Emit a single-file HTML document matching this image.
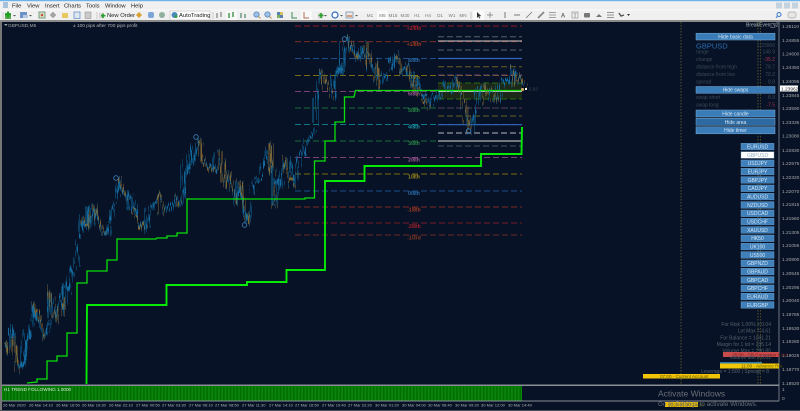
<!DOCTYPE html>
<html><head><meta charset="utf-8"><style>
html,body{margin:0;padding:0;background:#071226;width:800px;height:411px;overflow:hidden}
svg{display:block;font-family:"Liberation Sans",sans-serif}
.m{font-size:5.8px;fill:#222}
.p{font-size:4.8px;fill:#a8a8a8}
.d{font-size:4.05px;fill:#b4b4b4}
.l{font-size:5px;font-weight:bold;text-anchor:middle}
.b{font-size:5px;fill:#d5e5f2;text-anchor:middle}
.r{font-size:5px;fill:#3c4c58}
.v{font-size:5px;fill:#3c4c58;text-anchor:end}
.i{font-size:5px;fill:#55606a;text-anchor:end}
.tf{font-size:4.6px;fill:#777;text-anchor:middle}
</style></head><body>
<svg width="800" height="411" viewBox="0 0 800 411" xmlns="http://www.w3.org/2000/svg">
<defs>
<pattern id="st" width="3.33" height="20" patternUnits="userSpaceOnUse"><rect width="3.33" height="20" fill="#0a850a"/><rect width="1.5" height="20" fill="#006c00"/></pattern>
<filter id="jit" filterUnits="userSpaceOnUse" x="0" y="0" width="800" height="411" color-interpolation-filters="sRGB"><feTurbulence type="turbulence" baseFrequency="0.55 0.015" numOctaves="2" seed="4" result="n"/><feDisplacementMap in="SourceGraphic" in2="n" scale="14" xChannelSelector="A" yChannelSelector="R"/></filter>
</defs>
<rect width="800" height="411" fill="#071226"/>
<!-- top chrome -->
<rect width="800" height="21" fill="#f0f0f0"/>
<rect width="800" height="1.2" fill="#6cb4ec"/>
<rect y="9.5" width="800" height="1" fill="#fafafa"/>
<rect y="20" width="800" height="2" fill="#8a8a8a"/>
<rect x="0" y="22" width="2" height="389" fill="#777"/>
<rect x="3" y="2" width="5" height="6" fill="#a9c2dc"/>
<text class="m" x="12" y="7.5">File</text><text class="m" x="27" y="7.5">View</text><text class="m" x="45" y="7.5">Insert</text><text class="m" x="64" y="7.5">Charts</text><text class="m" x="86" y="7.5">Tools</text><text class="m" x="105" y="7.5">Window</text><text class="m" x="131" y="7.5">Help</text>
<g fill="#c4d3e0"><rect x="776" y="2.5" width="6" height="6"/><rect x="784" y="2.5" width="6" height="6"/><rect x="792" y="2.5" width="6" height="6"/></g>
<!-- toolbar icons -->
<g>
<rect x="5" y="13" width="6" height="6" fill="#57a84e"/><path d="M8 11.5v6M5 14.5h6" stroke="#22a022" stroke-width="2"/>
<rect x="20" y="12" width="7" height="6" fill="#6d93c8"/><rect x="23" y="15" width="5" height="3" fill="#b7c9e2"/>
<rect x="39" y="12" width="6" height="6" fill="#d8e4c8" stroke="#5a8a6a" stroke-width=".8"/><circle cx="42" cy="15" r="1.3" fill="#c85040"/>
<path d="M53 12v6M50 15h6" stroke="#8a8a8a" stroke-width="1"/><circle cx="53" cy="15" r="2" fill="none" stroke="#8a8a8a" stroke-width=".7"/>
<rect x="62" y="13" width="6" height="5" fill="#e8c860"/><rect x="74" y="12" width="6" height="6.5" fill="#dde7f2" stroke="#6d93c8" stroke-width=".8"/>
<rect x="85" y="12" width="6" height="6.5" fill="#c9c9c9" stroke="#999" stroke-width=".6"/>
<rect x="99" y="13" width="5" height="5.5" fill="#d6d6d6"/><path d="M103 13.5v4.5M101 15.7h4.5" stroke="#28a028" stroke-width="1.6"/>
<text x="107" y="17" font-size="5.8" fill="#222">New Order</text>
<path d="M139 12l3 3-3 3-3-3z" fill="#d8a030"/><rect x="148" y="12" width="6" height="6" rx="2" fill="#7da6d8"/><circle cx="162" cy="15" r="3" fill="#8fb09c"/>
<rect x="170" y="11" width="40" height="9" fill="#fbfbfb" stroke="#b5b5b5" stroke-width=".5"/><circle cx="174.500" cy="15" r="3" fill="#4a8ac0"/><circle cx="176" cy="16.500" r="1.500" fill="#3aa040"/>
<text x="179" y="17.200" font-size="5.800" fill="#222">AutoTrading</text>
<path d="M217 13v5M221 12v5" stroke="#777" stroke-width="1.100"/><rect x="226" y="11" width="11" height="9" fill="#f9f9f9"/><path d="M229 13v5M233 12v5" stroke="#2b8a38" stroke-width="1.300"/><path d="M241 13v5M245 14v4" stroke="#3d7a5a" stroke-width="1.100"/>
<circle cx="256.500" cy="14.500" r="2.700" fill="#9cc0e6" stroke="#4a7ab0" stroke-width=".7"/><path d="M258.500 16.500l2 2" stroke="#c09040" stroke-width="1"/>
<circle cx="267.500" cy="14.500" r="2.700" fill="#9cc0e6" stroke="#4a7ab0" stroke-width=".7"/><path d="M269.500 16.500l2 2" stroke="#c09040" stroke-width="1"/>
<rect x="277" y="12" width="6" height="6" fill="#5a7fae"/><rect x="277" y="15" width="3" height="3" fill="#7ab060"/><rect x="280" y="12" width="3" height="3" fill="#d8c060"/>
<path d="M292 12v6h5" stroke="#3d8a5a" fill="none"/><rect x="301" y="11" width="11" height="9" fill="#f9f9f9"/><path d="M304 12v6h5" stroke="#b06a50" fill="none"/>
<rect x="318" y="13" width="5" height="5.500" fill="#d0d0d0"/><path d="M321 13v5M318.500 15.500h5" stroke="#28a028" stroke-width="1.600"/>
<circle cx="335" cy="15" r="3" fill="#fff" stroke="#2a68b8" stroke-width="1.200"/><rect x="346" y="12" width="7" height="6" fill="#e9e9e9" stroke="#7a94b0" stroke-width=".8"/><rect x="347" y="15" width="5" height="2" fill="#d8a080"/>
<rect x="377" y="11" width="11" height="9" fill="#fbfbfb"/>
<text class="tf" x="370" y="17">M1</text><text class="tf" x="382.500" y="17" fill="#444">M5</text><text class="tf" x="393" y="17">M15</text><text class="tf" x="405" y="17">M30</text><text class="tf" x="417" y="17">H1</text><text class="tf" x="428" y="17">H4</text><text class="tf" x="440" y="17">D1</text><text class="tf" x="452" y="17">W1</text><text class="tf" x="463" y="17">MN</text>
<rect x="473" y="11" width="11" height="9" fill="#fbfbfb"/><path d="M477 12v6l1.500-1.500 1 2 .8-.4-1-2h2z" fill="#333"/>
<path d="M490 12v6M487 15h6" stroke="#777" stroke-width=".7"/><path d="M505 12v6" stroke="#777"/><path d="M514 15h6" stroke="#777"/><path d="M526 18l6-6" stroke="#777" stroke-width=".8"/>
<path d="M538 18l6-6" stroke="#888" stroke-width="1.800"/><path d="M549 12.500h7M549 15h7M549 17.500h7" stroke="#888" stroke-width=".8"/>
<text x="563" y="17.500" font-size="6" fill="#666" text-anchor="middle" font-weight="bold">A</text><rect x="572" y="12" width="6" height="6" fill="none" stroke="#888" stroke-width=".6"/><text x="575" y="17.300" font-size="5.500" fill="#666" text-anchor="middle">T</text>
<rect x="584" y="13" width="6" height="4.500" rx="1" fill="#777"/><path d="M596 17l3-3 3 3z" fill="#777"/><path d="M607 12.500h7M607 15h7M607 17.500h7" stroke="#777" stroke-width=".7"/><path d="M619 13l2 3 3-1" stroke="#555" fill="none" stroke-width="1.400"/><path d="M627 14l1.500 2 1.500-2z" fill="#333"/>
<circle cx="779" cy="14.500" r="2" fill="none" stroke="#3a78c8" stroke-width="1"/><path d="M777.500 16l-1.500 2" stroke="#3a78c8"/><rect x="788" y="12" width="8" height="6" rx="2" fill="#e6e6e6" stroke="#aaa" stroke-width=".7"/>
<g fill="#555"><path d="M13 15l1.500 1.500L16 15zM29 15l1.500 1.500L32 15zM324 15l1.500 1.500L327 15zM340 15l1.500 1.500L343 15zM355 15l1.500 1.500L358 15z"/></g>
<path d="M3 12v7M97 12v7M213 12v7M471 12v7" stroke="#bbb" stroke-width=".7"/>
</g>
<!-- chart labels -->
<path d="M4 24.300l2 1.500 1.500-1.500z" fill="#ddd"/>
<text x="8" y="27" font-size="4.800" fill="#a8a8a8">GBPUSD,M5</text>
<text x="73" y="27" font-size="4.800" fill="#b4b4b4">± 100 pips after 700 pips profit</text>
<!-- levels -->
<g fill="none" stroke-width=".9" stroke-dasharray="6 3">
<path d="M295 26H522" stroke="#8a1a28"/><path d="M295 41.700H522" stroke="#8a3020"/><path d="M295 58.500H522" stroke="#1a4f8a"/><path d="M295 75.500H522" stroke="#7a6a10"/><path d="M295 91.500H522" stroke="#7a3f78"/><path d="M295 108H522" stroke="#1a6a38"/><path d="M295 124.500H522" stroke="#0a7a88"/><path d="M295 141H522" stroke="#1a6a38"/><path d="M295 157.500H522" stroke="#7a3f78"/><path d="M295 174H522" stroke="#7a6a10"/><path d="M295 191H522" stroke="#1a4f8a"/><path d="M295 207H522" stroke="#7a2a20"/><path d="M295 223H522" stroke="#7a1a24"/><path d="M295 235H522" stroke="#6a2a20"/>
</g>
<rect x="438" y="83" width="84" height="16" fill="#4a5a00" opacity=".32"/>
<g fill="none">
<path d="M438 36.700H522M438 50H522" stroke="#5a6068" stroke-dasharray="6 3"/><path d="M438 41H522" stroke="#c8c8c8" stroke-width="1"/>
<path d="M438 58.500H522" stroke="#3464b8" stroke-width="1.200"/><path d="M438 66.700H522" stroke="#6a6020" stroke-dasharray="6 3"/><path d="M438 75H522" stroke="#6a3f70" stroke-dasharray="6 3"/>
<path d="M438 83H522M438 99H522" stroke="#2a6a10" stroke-dasharray="6 3"/><path d="M438 91H522" stroke="#d8d8d8" stroke-width="1.800"/>
<path d="M438 108H522" stroke="#5a3f60" stroke-dasharray="6 3"/><path d="M438 116H522" stroke="#6a6020" stroke-dasharray="6 3"/><path d="M438 124.700H522" stroke="#3464b8" stroke-width="1.200"/><path d="M438 133H522" stroke="#7a8088" stroke-width="1.500" stroke-dasharray="6 3"/><path d="M438 141H522" stroke="#b4b4b4" stroke-width="1.200"/><path d="M438 146H522" stroke="#4a5058" stroke-dasharray="6 3"/>
</g>
<g>
<text class="l" x="414" y="30" fill="#a02028">+2/8th</text><text class="l" x="414" y="46" fill="#a03a20">+1/8th</text><text class="l" x="414" y="62" fill="#2a6aa8">8/8th</text><text class="l" x="414" y="79" fill="#9a8a20">7/8th</text><text class="l" x="414" y="95.500" fill="#a05a98">6/8th</text><text class="l" x="414" y="112" fill="#2a8a48">5/8th</text><text class="l" x="414" y="128.500" fill="#1a9aa8">4/8th</text><text class="l" x="414" y="145" fill="#2a8a48">3/8th</text><text class="l" x="414" y="161.500" fill="#a05a98">2/8th</text><text class="l" x="414" y="178.500" fill="#9a8a20">1/8th</text><text class="l" x="414" y="195" fill="#2a6aa8">0/8th</text><text class="l" x="414" y="211.500" fill="#a03a20">-1/8th</text><text class="l" x="414" y="228" fill="#a02028">-2/8th</text><text class="l" x="414" y="239.500" fill="#8a3a20">-1/3rd</text>
</g>
<!-- dotted verticals -->
<g fill="none" stroke-dasharray="1.500 1.500" stroke-width=".8">
<path d="M681 22V385" stroke="#6a6a2a"/><path d="M758 22V385" stroke="#6a6a2a"/><path d="M760.500 22V385" stroke="#5a5a2a"/>
</g>
<!-- price -->
<g filter="url(#jit)" transform="translate(-1 -3)">
<path d="M2 340 4 353 6 336 8 328 10 340 12 352 15 370 17 362 20 368 22 348 25 328 27 338 30 303 33 318 35 313 38 330 42 337 45 322 47 320 48 287 51 310 53 320 56 298 58 290 60 305 62 313 63 283 66 290 68 267 71 275 74 258 76 240 77 227 78 217 81 226 85 228 86 206 88 228 91 215 93 207 96 222 100 233 103 225 106 233 108 222 110 210 113 200 116 178 119 192 123 200 127 192 128 210 131 205 135 218 139 222 143 230 147 212 150 203 155 193 158 205 160 212 164 205 168 210 172 193 175 200 177 207 181 190 184 170 187 153 188 168 192 150 196 137 198 150 200 160 205 162 209 168 213 173 216 155 218 150 221 172 223 187 227 170 230 190 233 203 237 182 240 205 245 223 248 195 250 183 255 180 260 173 263 163 266 150 268 143 270 175 272 205 274 178 278 187 280 157 283 170 285 158 289 172 293 187 296 165 298 157 300 153 302 153 305 142 308 135 311 130 313 125 313 98 316 85 318 70 321 78 325 88 330 98 332 78 335 65 338 75 341 50 345 38 348 50 351 45 355 58 358 52 360 48 362 58 365 42 367 65 370 70 372 60 375 80 377 87 381 78 387 68 390 58 393 52 396 68 398 75 402 65 405 62 407 75 410 70 413 88 416 82 420 95 424 92 427 107 430 100 433 95 437 95 441 82 445 88 448 92 450 82 453 75 456 88 457 92 460 96 462 102 465 120 468 132 471 118 473 105 477 90 480 85 484 95 487 103 490 92 492 85 495 95 497 100 500 85 502 78 505 82 508 65 511 72 513 85 515 78 517 75 520 85 522 88" fill="none" stroke="#126a9f" stroke-width="1.900" stroke-linejoin="round"/>
<path d="M2 340 4 353M10 340 15 370M30 303 35 313 42 337M48 287 53 320M58 290 62 313M78 217 85 228M88 228 88 210M93 207 100 233M116 178 123 200M128 210 135 218 143 230M155 193 160 212M172 193 177 207M196 137 200 160 213 173M218 150 223 187M227 170 233 203M237 182 245 223M268 143 272 205M280 157 284 172 293 187M318 70 325 88 330 98M345 38 355 58M365 42 367 65M372 60 377 87M393 52 398 75M405 62 413 88 420 95 427 107M453 75 462 102 468 132M480 85 487 103M492 85 497 100M508 65 513 85M517 75 522 88" fill="none" stroke="#7d6430" stroke-width="1.700"/>
</g>
<path d="M63 283v16M86 206v18M110 210v10M272 165v40M313 98v25M128 190v20" stroke="#126a9f" stroke-width="1"/>
<g fill="none" stroke="#3f80b8" stroke-width=".8"><circle cx="116" cy="178" r="2.300"/><circle cx="196" cy="137" r="2.300"/><circle cx="244.500" cy="225" r="2.300"/><circle cx="344.500" cy="39" r="2.300"/><circle cx="468.500" cy="131" r="2.300"/></g>
<!-- stops -->
<path d="M27 383 37 382V379H47V361H57V356H67V333H77V283H87V271H107V260H117V239H156L157 238H167V236H177V233H187V199H305V198H314.500V161H325V141H335V122H344.500V97H354L355.500 90.500H522" fill="none" stroke="#0ae00a" stroke-width="1.300"/>
<path d="M86.500 384 87 305H166.500V285H247V282H286.500V270H325V181H364.500V166H481V154H521.500L522 127" fill="none" stroke="#06ea06" stroke-width="1.900"/>
<rect x="521" y="88" width="3" height="3" rx="1" fill="#c8a860"/><rect x="525" y="88" width="2" height="2" fill="#fff"/>
<text x="529" y="90.500" font-size="4.500" fill="#3c4854">2.63</text>
<!-- panel -->
<text x="746" y="26.500" font-size="5" fill="#aeb4ba">BreakEven_v2</text><rect x="771" y="23.500" width="4" height="4" fill="none" stroke="#778" stroke-width=".6"/>
<g fill="#3a7cb8" stroke="#7aaad4" stroke-width=".5"><rect x="696" y="33.200" width="79" height="6.800"/><rect x="696" y="86.500" width="79" height="6.800"/><rect x="696" y="110" width="79" height="7"/><rect x="696" y="126.800" width="79" height="7"/></g>
<rect x="696" y="118.300" width="79" height="7" fill="#2e6aa2" stroke="#7aaad4" stroke-width=".5"/>
<text class="b" x="735.500" y="38.500">Hide basic data</text><text class="b" x="735.500" y="91.700">Hide swaps</text><text class="b" x="735.500" y="115.500">Hide candle</text><text class="b" x="735.500" y="123.800">Hide area</text><text class="b" x="735.500" y="132.200">Hide timer</text>
<text x="696" y="48.500" font-size="7.500" fill="#2a6eb0">GBPUSD</text><text class="v" x="775" y="47">1.23960</text>
<text class="r" x="696" y="53.700">range</text><text class="v" x="775" y="53.700">148.9</text>
<text class="r" x="696" y="61">change</text><text class="v" x="775" y="61" style="fill:#a8324e">-35.2</text>
<text class="r" x="696" y="68.500">distance from high</text><text class="v" x="775" y="68.500">78.7</text>
<text class="r" x="696" y="76">distance from low</text><text class="v" x="775" y="76">70.2</text>
<text class="r" x="696" y="83.500">spread</text><text class="v" x="775" y="83.500">8.8</text>
<text class="r" x="696" y="99">swap short</text><text class="v" x="775" y="99">8.9</text>
<text class="r" x="696" y="106.700">swap long</text><text class="v" x="775" y="106.700" style="fill:#a8324e">-7.5</text>
<!-- pairs -->
<g fill="#3f80bb" stroke="#76a6d0" stroke-width=".4">
<rect x="741" y="143.300" width="33" height="6.600"/><rect x="741" y="160" width="33" height="6.600"/><rect x="741" y="168.300" width="33" height="6.600"/><rect x="741" y="176.600" width="33" height="6.600"/><rect x="741" y="185" width="33" height="6.600"/><rect x="741" y="193.300" width="33" height="6.600"/><rect x="741" y="201.600" width="33" height="6.600"/><rect x="741" y="210" width="33" height="6.600"/><rect x="741" y="218.300" width="33" height="6.600"/><rect x="741" y="226.600" width="33" height="6.600"/><rect x="741" y="235" width="33" height="6.600"/><rect x="741" y="243.300" width="33" height="6.600"/><rect x="741" y="251.600" width="33" height="6.600"/><rect x="741" y="260" width="33" height="6.600"/><rect x="741" y="268.300" width="33" height="6.600"/><rect x="741" y="276.600" width="33" height="6.600"/><rect x="741" y="285" width="33" height="6.600"/><rect x="741" y="293.300" width="33" height="6.600"/><rect x="741" y="301.600" width="33" height="6.600"/>
</g>
<rect x="741" y="151.700" width="33" height="6.600" fill="#fff" stroke="#76a6d0" stroke-width=".4"/>
<g>
<text class="b" x="757.500" y="148.500">EURUSD</text><text class="b" x="757.500" y="156.800" style="fill:#9ab0c4">GBPUSD</text><text class="b" x="757.500" y="165.200">USDJPY</text><text class="b" x="757.500" y="173.500">EURJPY</text><text class="b" x="757.500" y="181.800">GBPJPY</text><text class="b" x="757.500" y="190.200">CADJPY</text><text class="b" x="757.500" y="198.500">AUDUSD</text><text class="b" x="757.500" y="206.800">NZDUSD</text><text class="b" x="757.500" y="215.200">USDCAD</text><text class="b" x="757.500" y="223.500">USDCHF</text><text class="b" x="757.500" y="231.800">XAUUSD</text><text class="b" x="757.500" y="240.200">HK50</text><text class="b" x="757.500" y="248.500">UK100</text><text class="b" x="757.500" y="256.800">US500</text><text class="b" x="757.500" y="265.200">GBPNZD</text><text class="b" x="757.500" y="273.500">GBPAUD</text><text class="b" x="757.500" y="281.800">GBPCAD</text><text class="b" x="757.500" y="290.200">GBPCHF</text><text class="b" x="757.500" y="298.500">EURAUD</text><text class="b" x="757.500" y="306.800">EURGBP</text>
</g>
<!-- axis -->
<path d="M779 22V401" stroke="#8a8f96" stroke-width=".8"/>
<g>
<text class="p" x="782" y="28">1.25110</text><text class="p" x="782" y="42">1.24855</text><text class="p" x="782" y="55.500">1.24600</text><text class="p" x="782" y="69">1.24350</text><text class="p" x="782" y="83">1.24095</text><text class="p" x="782" y="97">1.23845</text><text class="p" x="782" y="110">1.23590</text><text class="p" x="782" y="124">1.23335</text><text class="p" x="782" y="137.500">1.23080</text><text class="p" x="782" y="152">1.22830</text><text class="p" x="782" y="165">1.22575</text><text class="p" x="782" y="179">1.22320</text><text class="p" x="782" y="193">1.22070</text><text class="p" x="782" y="206">1.21815</text><text class="p" x="782" y="220">1.21560</text><text class="p" x="782" y="234">1.21305</text><text class="p" x="782" y="247">1.21055</text><text class="p" x="782" y="261">1.20800</text><text class="p" x="782" y="275">1.20545</text><text class="p" x="782" y="289">1.20295</text><text class="p" x="782" y="302">1.20040</text><text class="p" x="782" y="316">1.19785</text><text class="p" x="782" y="330">1.19530</text><text class="p" x="782" y="343">1.19280</text><text class="p" x="782" y="357">1.19025</text><text class="p" x="782" y="371">1.18770</text><text class="p" x="782" y="385">1.18520</text>
<text class="p" x="782" y="391">1</text><text class="p" x="782" y="400">0</text>
</g>
<rect x="780" y="85.500" width="18" height="6" fill="#fff"/><text x="781" y="90.300" font-size="4.800" fill="#222">1.23962</text>
<!-- bottom info -->
<text class="i" x="771" y="326">For Risk 1.00% = 0.04</text><text class="i" x="771" y="332.500">Lot Max = 4.61</text><text class="i" x="771" y="339.500">For Balance = 1041.21</text><text class="i" x="771" y="346">Margin for 1 lot = 235.14</text><text class="i" x="771" y="352.500">Volume Max = 280.80</text>
<rect x="723" y="352" width="56" height="5" fill="#c84a4a"/><text x="732" y="356.300" font-size="4.600" fill="#6a1a1a">15:00 - CB Consumer Conf</text>
<text class="i" x="771" y="359">Volume Min = 0.01</text>
<rect x="720" y="362" width="42" height="2" fill="#2a7ab0"/><rect x="720" y="363.500" width="59" height="5" fill="#f0c808"/><text x="741" y="367.700" font-size="4.600" fill="#5a5000">11:00 - Advance Ret.</text>
<text class="i" x="769" y="373">Leverage = 1:500 | Spread = 8</text>
<rect x="643" y="374" width="77" height="4.500" fill="#f2c408"/><text x="660" y="378" font-size="4.600" fill="#5a5000">07:00 - Current Account</text>
<!-- subwindow -->
<rect x="2" y="384.500" width="777" height="1.500" fill="#8a8f96"/>
<rect x="2" y="386" width="520" height="15" fill="url(#st)"/>
<text x="4" y="391" font-size="4.600" fill="#d8e8d8">H1 TREND FOLLOWING 1.0000</text>
<rect x="2" y="400.500" width="777" height="1" fill="#8a8f96"/>
<g>
<text class="d" x="3" y="406.500">26 Mar 2020</text><text class="d" x="29" y="406.500">26 Mar 14:10</text><text class="d" x="56" y="406.500">26 Mar 16:50</text><text class="d" x="82" y="406.500">26 Mar 19:30</text><text class="d" x="109" y="406.500">26 Mar 22:10</text><text class="d" x="136" y="406.500">27 Mar 00:50</text><text class="d" x="162" y="406.500">27 Mar 03:30</text><text class="d" x="189" y="406.500">27 Mar 06:10</text><text class="d" x="215" y="406.500">27 Mar 08:50</text><text class="d" x="242" y="406.500">27 Mar 11:30</text><text class="d" x="269" y="406.500">27 Mar 14:10</text><text class="d" x="295" y="406.500">27 Mar 16:50</text><text class="d" x="322" y="406.500">27 Mar 19:40</text><text class="d" x="348" y="406.500">27 Mar 22:20</text><text class="d" x="375" y="406.500">30 Mar 01:20</text><text class="d" x="402" y="406.500">30 Mar 04:00</text><text class="d" x="428" y="406.500">30 Mar 06:40</text><text class="d" x="455" y="406.500">30 Mar 09:20</text><text class="d" x="481" y="406.500">30 Mar 12:00</text><text class="d" x="508" y="406.500">30 Mar 14:40</text>
</g>
<rect x="0" y="410" width="800" height="1" fill="#4a5058"/>
<!-- watermark -->
<rect x="665" y="402" width="33" height="5" fill="#f0c000"/><text x="668" y="406.300" font-size="4.600" fill="#5a5000">2020.03.30 14:00</text>
<text x="658" y="396.500" font-size="8.500" fill="#6a7078">Activate Windows</text>
<text x="658" y="406" font-size="6.300" fill="#6a7078">Go to Settings to activate Windows.</text>
</svg>
</body></html>
